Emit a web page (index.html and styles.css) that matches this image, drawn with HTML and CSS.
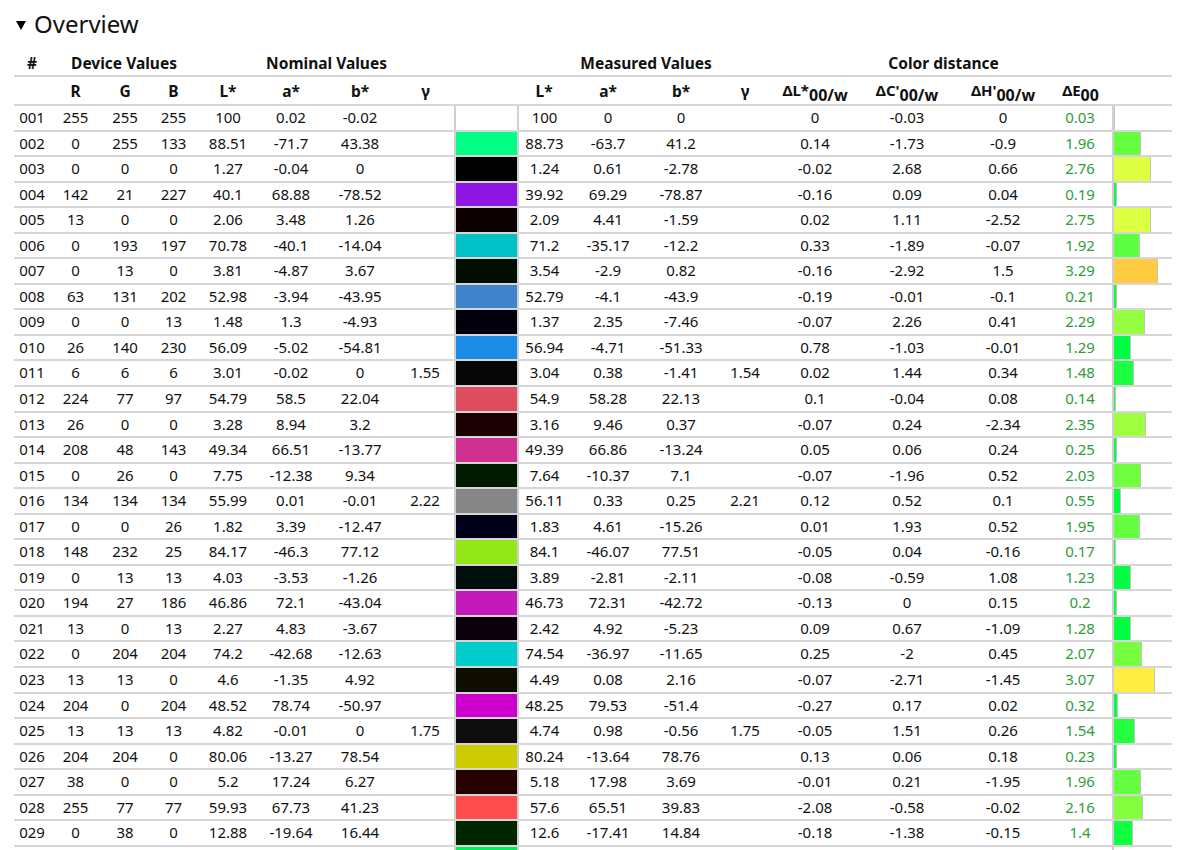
FILE: index.html
```html
<!DOCTYPE html>
<html>
<head>
<meta charset="utf-8">
<link rel="stylesheet" href="styles.css">
</head>
<body>
<div class="page">
  <div class="title"><span class="tri"></span><span>Overview</span></div>
  <table class="ov">
    <colgroup>
      <col class="c-num"><col class="c-r"><col class="c-g"><col class="c-b">
      <col class="c-nl"><col class="c-na"><col class="c-nb"><col class="c-ng">
      <col class="c-sw">
      <col class="c-ml"><col class="c-ma"><col class="c-mb"><col class="c-mg">
      <col class="c-dl"><col class="c-dc"><col class="c-dh"><col class="c-de">
      <col class="c-bar">
    </colgroup>
    <thead>
      <tr class="h1">
        <th>#</th><th colspan="3">Device Values</th><th colspan="4">Nominal Values</th><th></th>
        <th colspan="4">Measured Values</th><th colspan="4">Color distance</th><th></th>
      </tr>
      <tr class="h2">
        <th></th><th>R</th><th>G</th><th>B</th><th>L*</th><th>a*</th><th>b*</th><th>γ</th><th></th>
        <th>L*</th><th>a*</th><th>b*</th><th>γ</th>
        <th><span class="dh">ΔL*</span><span class="ds">00/w</span></th>
        <th><span class="dh">ΔC'</span><span class="ds">00/w</span></th>
        <th><span class="dh">ΔH'</span><span class="ds">00/w</span></th>
        <th><span class="dh">ΔE</span><span class="ds">00</span></th>
        <th></th>
      </tr>
    </thead>
    <tbody id="rows"></tbody>
  </table>
</div>
<script src="script.js"></script>
</body>
</html>
```
FILE: styles.css
```css
html, body {
  margin: 0;
  padding: 0;
  background: #ffffff;
}
body {
  font-family: "Noto Sans", "DejaVu Sans", sans-serif;
  color: #111;
}
.page {
  padding: 9px 0 0 14px;
}
.title {
  display: flex;
  align-items: center;
  font-size: 24px;
  line-height: 30px;
  height: 30px;
  margin-bottom: 12px;
}
.tri {
  width: 0;
  height: 0;
  border-left: 5px solid transparent;
  border-right: 5px solid transparent;
  border-top: 9px solid #000;
  margin: 2px 8px 0 2px;
}
.ov {
  border-collapse: collapse;
  table-layout: fixed;
  width: 1158px;
  font-size: 15px;
}
.c-num { width: 36px; }
.c-r { width: 51px; }
.c-g { width: 48px; }
.c-b { width: 49px; }
.c-nl { width: 60px; }
.c-na { width: 66px; }
.c-nb { width: 72px; }
.c-ng { width: 59px; }
.c-sw { width: 63px; }
.c-ml { width: 52px; }
.c-ma { width: 76px; }
.c-mb { width: 70px; }
.c-mg { width: 58px; }
.c-dl { width: 82px; }
.c-dc { width: 102px; }
.c-dh { width: 90px; }
.c-de { width: 65px; }
.c-bar { width: 59px; }
.ov th, .ov td {
  padding: 0;
  text-align: center;
  white-space: nowrap;
  border-bottom: 2px solid #d6d6d6;
}
.ov th {
  font-weight: 700;
  font-size: 15.5px;
}
.h1 th {
  height: 24px;
  line-height: 24px;
}
.h2 th {
  height: 26px;
  line-height: 26px;
}
.dh {
  font-size: 15px;
  vertical-align: 1px;
}
.ds {
  font-size: 16px;
  position: relative;
  top: 4px;
}
.ov td {
  height: 23.55px;
  line-height: 23.55px;
}
.ov td.sw {
  border-left: 2px solid #d0d0d0;
  border-right: 2px solid #d0d0d0;
}
.ov td.de {
  color: #2f9c3c;
}
.ov td.bar {
  border-left: 2px solid #d0d0d0;
  text-align: left;
  vertical-align: top;
}
.barfill {
  height: 23.55px;
  box-sizing: border-box;
  border-right: 1px solid #c4c4c4;
}
```
FILE: script.js
```js
var data = [
["001",255,255,255,"100","0.02","-0.02","","100","0","0","","0","-0.03","0","0.03"],
["002",0,255,133,"88.51","-71.7","43.38","","88.73","-63.7","41.2","","0.14","-1.73","-0.9","1.96"],
["003",0,0,0,"1.27","-0.04","0","","1.24","0.61","-2.78","","-0.02","2.68","0.66","2.76"],
["004",142,21,227,"40.1","68.88","-78.52","","39.92","69.29","-78.87","","-0.16","0.09","0.04","0.19"],
["005",13,0,0,"2.06","3.48","1.26","","2.09","4.41","-1.59","","0.02","1.11","-2.52","2.75"],
["006",0,193,197,"70.78","-40.1","-14.04","","71.2","-35.17","-12.2","","0.33","-1.89","-0.07","1.92"],
["007",0,13,0,"3.81","-4.87","3.67","","3.54","-2.9","0.82","","-0.16","-2.92","1.5","3.29"],
["008",63,131,202,"52.98","-3.94","-43.95","","52.79","-4.1","-43.9","","-0.19","-0.01","-0.1","0.21"],
["009",0,0,13,"1.48","1.3","-4.93","","1.37","2.35","-7.46","","-0.07","2.26","0.41","2.29"],
["010",26,140,230,"56.09","-5.02","-54.81","","56.94","-4.71","-51.33","","0.78","-1.03","-0.01","1.29"],
["011",6,6,6,"3.01","-0.02","0","1.55","3.04","0.38","-1.41","1.54","0.02","1.44","0.34","1.48"],
["012",224,77,97,"54.79","58.5","22.04","","54.9","58.28","22.13","","0.1","-0.04","0.08","0.14"],
["013",26,0,0,"3.28","8.94","3.2","","3.16","9.46","0.37","","-0.07","0.24","-2.34","2.35"],
["014",208,48,143,"49.34","66.51","-13.77","","49.39","66.86","-13.24","","0.05","0.06","0.24","0.25"],
["015",0,26,0,"7.75","-12.38","9.34","","7.64","-10.37","7.1","","-0.07","-1.96","0.52","2.03"],
["016",134,134,134,"55.99","0.01","-0.01","2.22","56.11","0.33","0.25","2.21","0.12","0.52","0.1","0.55"],
["017",0,0,26,"1.82","3.39","-12.47","","1.83","4.61","-15.26","","0.01","1.93","0.52","1.95"],
["018",148,232,25,"84.17","-46.3","77.12","","84.1","-46.07","77.51","","-0.05","0.04","-0.16","0.17"],
["019",0,13,13,"4.03","-3.53","-1.26","","3.89","-2.81","-2.11","","-0.08","-0.59","1.08","1.23"],
["020",194,27,186,"46.86","72.1","-43.04","","46.73","72.31","-42.72","","-0.13","0","0.15","0.2"],
["021",13,0,13,"2.27","4.83","-3.67","","2.42","4.92","-5.23","","0.09","0.67","-1.09","1.28"],
["022",0,204,204,"74.2","-42.68","-12.63","","74.54","-36.97","-11.65","","0.25","-2","0.45","2.07"],
["023",13,13,0,"4.6","-1.35","4.92","","4.49","0.08","2.16","","-0.07","-2.71","-1.45","3.07"],
["024",204,0,204,"48.52","78.74","-50.97","","48.25","79.53","-51.4","","-0.27","0.17","0.02","0.32"],
["025",13,13,13,"4.82","-0.01","0","1.75","4.74","0.98","-0.56","1.75","-0.05","1.51","0.26","1.54"],
["026",204,204,0,"80.06","-13.27","78.54","","80.24","-13.64","78.76","","0.13","0.06","0.18","0.23"],
["027",38,0,0,"5.2","17.24","6.27","","5.18","17.98","3.69","","-0.01","0.21","-1.95","1.96"],
["028",255,77,77,"59.93","67.73","41.23","","57.6","65.51","39.83","","-2.08","-0.58","-0.02","2.16"],
["029",0,38,0,"12.88","-19.64","16.44","","12.6","-17.41","14.84","","-0.18","-1.38","-0.15","1.4"]
];

function barColor(de) {
  var r = Math.max(0, Math.min(255, Math.round((de - 1.3) * 152)));
  var g = de > 2.96 ? Math.max(0, Math.round(255 - (de - 2.96) * 155)) : 255;
  return "rgb(" + r + "," + g + ",64)";
}

var tbody = document.getElementById("rows");
var html = "";
data.forEach(function (d) {
  var de = parseFloat(d[15]);
  html += "<tr>";
  html += "<td>" + d[0] + "</td>";
  html += "<td>" + d[1] + "</td><td>" + d[2] + "</td><td>" + d[3] + "</td>";
  html += "<td>" + d[4] + "</td><td>" + d[5] + "</td><td>" + d[6] + "</td><td>" + d[7] + "</td>";
  html += "<td class=\"sw\" style=\"background:rgb(" + d[1] + "," + d[2] + "," + d[3] + ")\"></td>";
  html += "<td>" + d[8] + "</td><td>" + d[9] + "</td><td>" + d[10] + "</td><td>" + d[11] + "</td>";
  html += "<td>" + d[12] + "</td><td>" + d[13] + "</td><td>" + d[14] + "</td>";
  html += "<td class=\"de\">" + d[15] + "</td>";
  html += "<td class=\"bar\"><div class=\"barfill\" style=\"width:" + Math.max(1, de * 13.5).toFixed(1) + "px;background:" + barColor(de) + "\"></div></td>";
  html += "</tr>";
});
html += "<tr><td></td><td></td><td></td><td></td><td></td><td></td><td></td><td></td>" +
  "<td class=\"sw\" style=\"background:rgb(0,238,90)\"></td>" +
  "<td></td><td></td><td></td><td></td><td></td><td></td><td></td><td></td><td class=\"bar\"></td></tr>";
tbody.innerHTML = html;
```
